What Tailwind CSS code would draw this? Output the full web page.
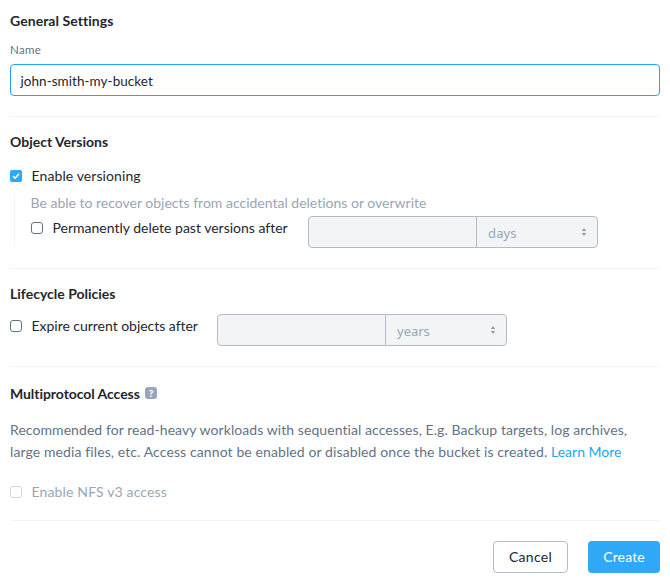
<!DOCTYPE html>
<html lang="en"><head><meta charset="utf-8"><title>Create Bucket</title>
<script src="https://cdn.jsdelivr.net/npm/@tailwindcss/browser@4"></script></head>
<body class="bg-white font-['Lato',sans-serif] text-[14px] leading-5 text-[#22272e] [font-variant-ligatures:none]">
<form class="h-[578px] w-[670px] overflow-hidden px-[10px]">
<section class="h-[117px] border-b border-[#f2f4f6] pt-[11px]">
<h2 class="font-bold tracking-[0.06px]">General Settings</h2>
<label class="mt-[11px] block text-[11.5px] leading-4 tracking-[0.3px] text-[#627386]">Name</label>
<div class="mt-[6px] flex h-8 items-center rounded-[4px] border border-[#22a5f7] pt-[2px] pl-[9.5px] text-[13.5px] tracking-[0.05px]">john-smith-my-bucket</div>
</section>
<section class="h-[152px] border-b border-[#f2f4f6] pt-[15px]">
<h2 class="font-bold">Object Versions</h2>
<div class="mt-[14px] flex h-5 items-center gap-[9.5px]">
<svg class="size-3" viewBox="0 0 12 12"><rect width="12" height="12" rx="2" fill="#2fa8f8"/><path d="M3 6.2 5.1 8.2 9 3.7" fill="none" stroke="#fff" stroke-width="1.6"/></svg>
<span class="tracking-[0.1px]">Enable versioning</span></div>
<div class="ml-1 mt-2 h-[54px] border-l border-[#f2f4f6] pl-4">
<p class="-ml-[0.5px] -mt-px h-5 text-[#9aa5b5]">Be able to recover objects from accidental deletions or overwrite</p>
<div class="mt-[3px] flex items-start">
<i class="mt-[6px] mr-[9.5px] size-3 rounded-[3px] border border-[#627386]"></i>
<span class="mt-[2px] w-[255.5px]">Permanently delete past versions after</span>
<div class="flex h-8 w-[290px] rounded-[4px] border border-[#b3bccb] bg-[#f2f4f6]">
<div class="w-[168px] border-r border-[#b3bccb]"></div>
<div class="flex flex-1 items-center justify-between pr-[10px] pl-[11px] font-['Noto_Sans',sans-serif] text-[13px] tracking-[0.15px] text-[#9aa5b5]"><span class="mt-[2px]">days</span>
<svg class="h-2 w-[6px]" viewBox="0 0 6 8" fill="#8f9bad"><path d="M.8 3 3 0 5.2 3ZM.8 5 3 8 5.2 5Z"/></svg></div>
</div>
</div></div>
</section>
<section class="h-[98px] border-b border-[#f2f4f6] pt-[15px]">
<h2 class="font-bold">Lifecycle Policies</h2>
<div class="mt-[10px] flex items-start">
<i class="mt-[6px] mr-[9.5px] size-3 rounded-[3px] border border-[#627386]"></i>
<span class="mt-[2px] w-[185.5px] tracking-[-0.03px]">Expire current objects after</span>
<div class="flex h-8 w-[290px] rounded-[4px] border border-[#b3bccb] bg-[#f2f4f6]">
<div class="w-[168px] border-r border-[#b3bccb]"></div>
<div class="flex flex-1 items-center justify-between pr-[10px] pl-[11px] font-['Noto_Sans',sans-serif] text-[13px] text-[#9aa5b5]"><span class="mt-[2px]">years</span>
<svg class="h-2 w-[6px]" viewBox="0 0 6 8" fill="#8f9bad"><path d="M.8 3 3 0 5.2 3ZM.8 5 3 8 5.2 5Z"/></svg></div>
</div>
</div>
</section>
<section class="h-[154px] border-b border-[#f2f4f6] pt-[17px]">
<div class="flex h-5 items-start gap-1"><h2 class="w-[131px] whitespace-nowrap font-bold tracking-[-0.06px]">Multiprotocol Access</h2>
<span class="mt-[3px] flex size-3 items-center justify-center rounded-[3px] bg-[#9aa5b9] text-[10px] font-black leading-3 text-white">?</span></div>
<p class="mt-[15px] whitespace-nowrap leading-[22px] text-[#627386]"><span class="tracking-[0.07px]">Recommended for read-heavy workloads with sequential accesses, E.g. Backup targets, log archives,</span><br><span class="tracking-[0.105px]">large media files, etc. Access cannot be enabled or disabled once the bucket is created.</span> <a class="text-[#22a5f7]">Learn More</a></p>
<div class="mt-[19px] flex h-5 items-center gap-[9.5px] text-[#9aa5b5]"><i class="size-3 rounded-[3px] border border-[#d0d6df]"></i><span class="tracking-[0.15px]">Enable NFS v3 access</span></div>
</section>
<div class="flex justify-end gap-5 pt-5">
<button type="button" class="h-8 w-[75px] rounded-[4px] border border-[#b3bccb] tracking-[0.3px]">Cancel</button>
<button type="button" class="h-8 w-[72px] rounded-[4px] bg-[#2fa8f8] tracking-[0.15px] text-white">Create</button>
</div>
</form>
</body></html>
